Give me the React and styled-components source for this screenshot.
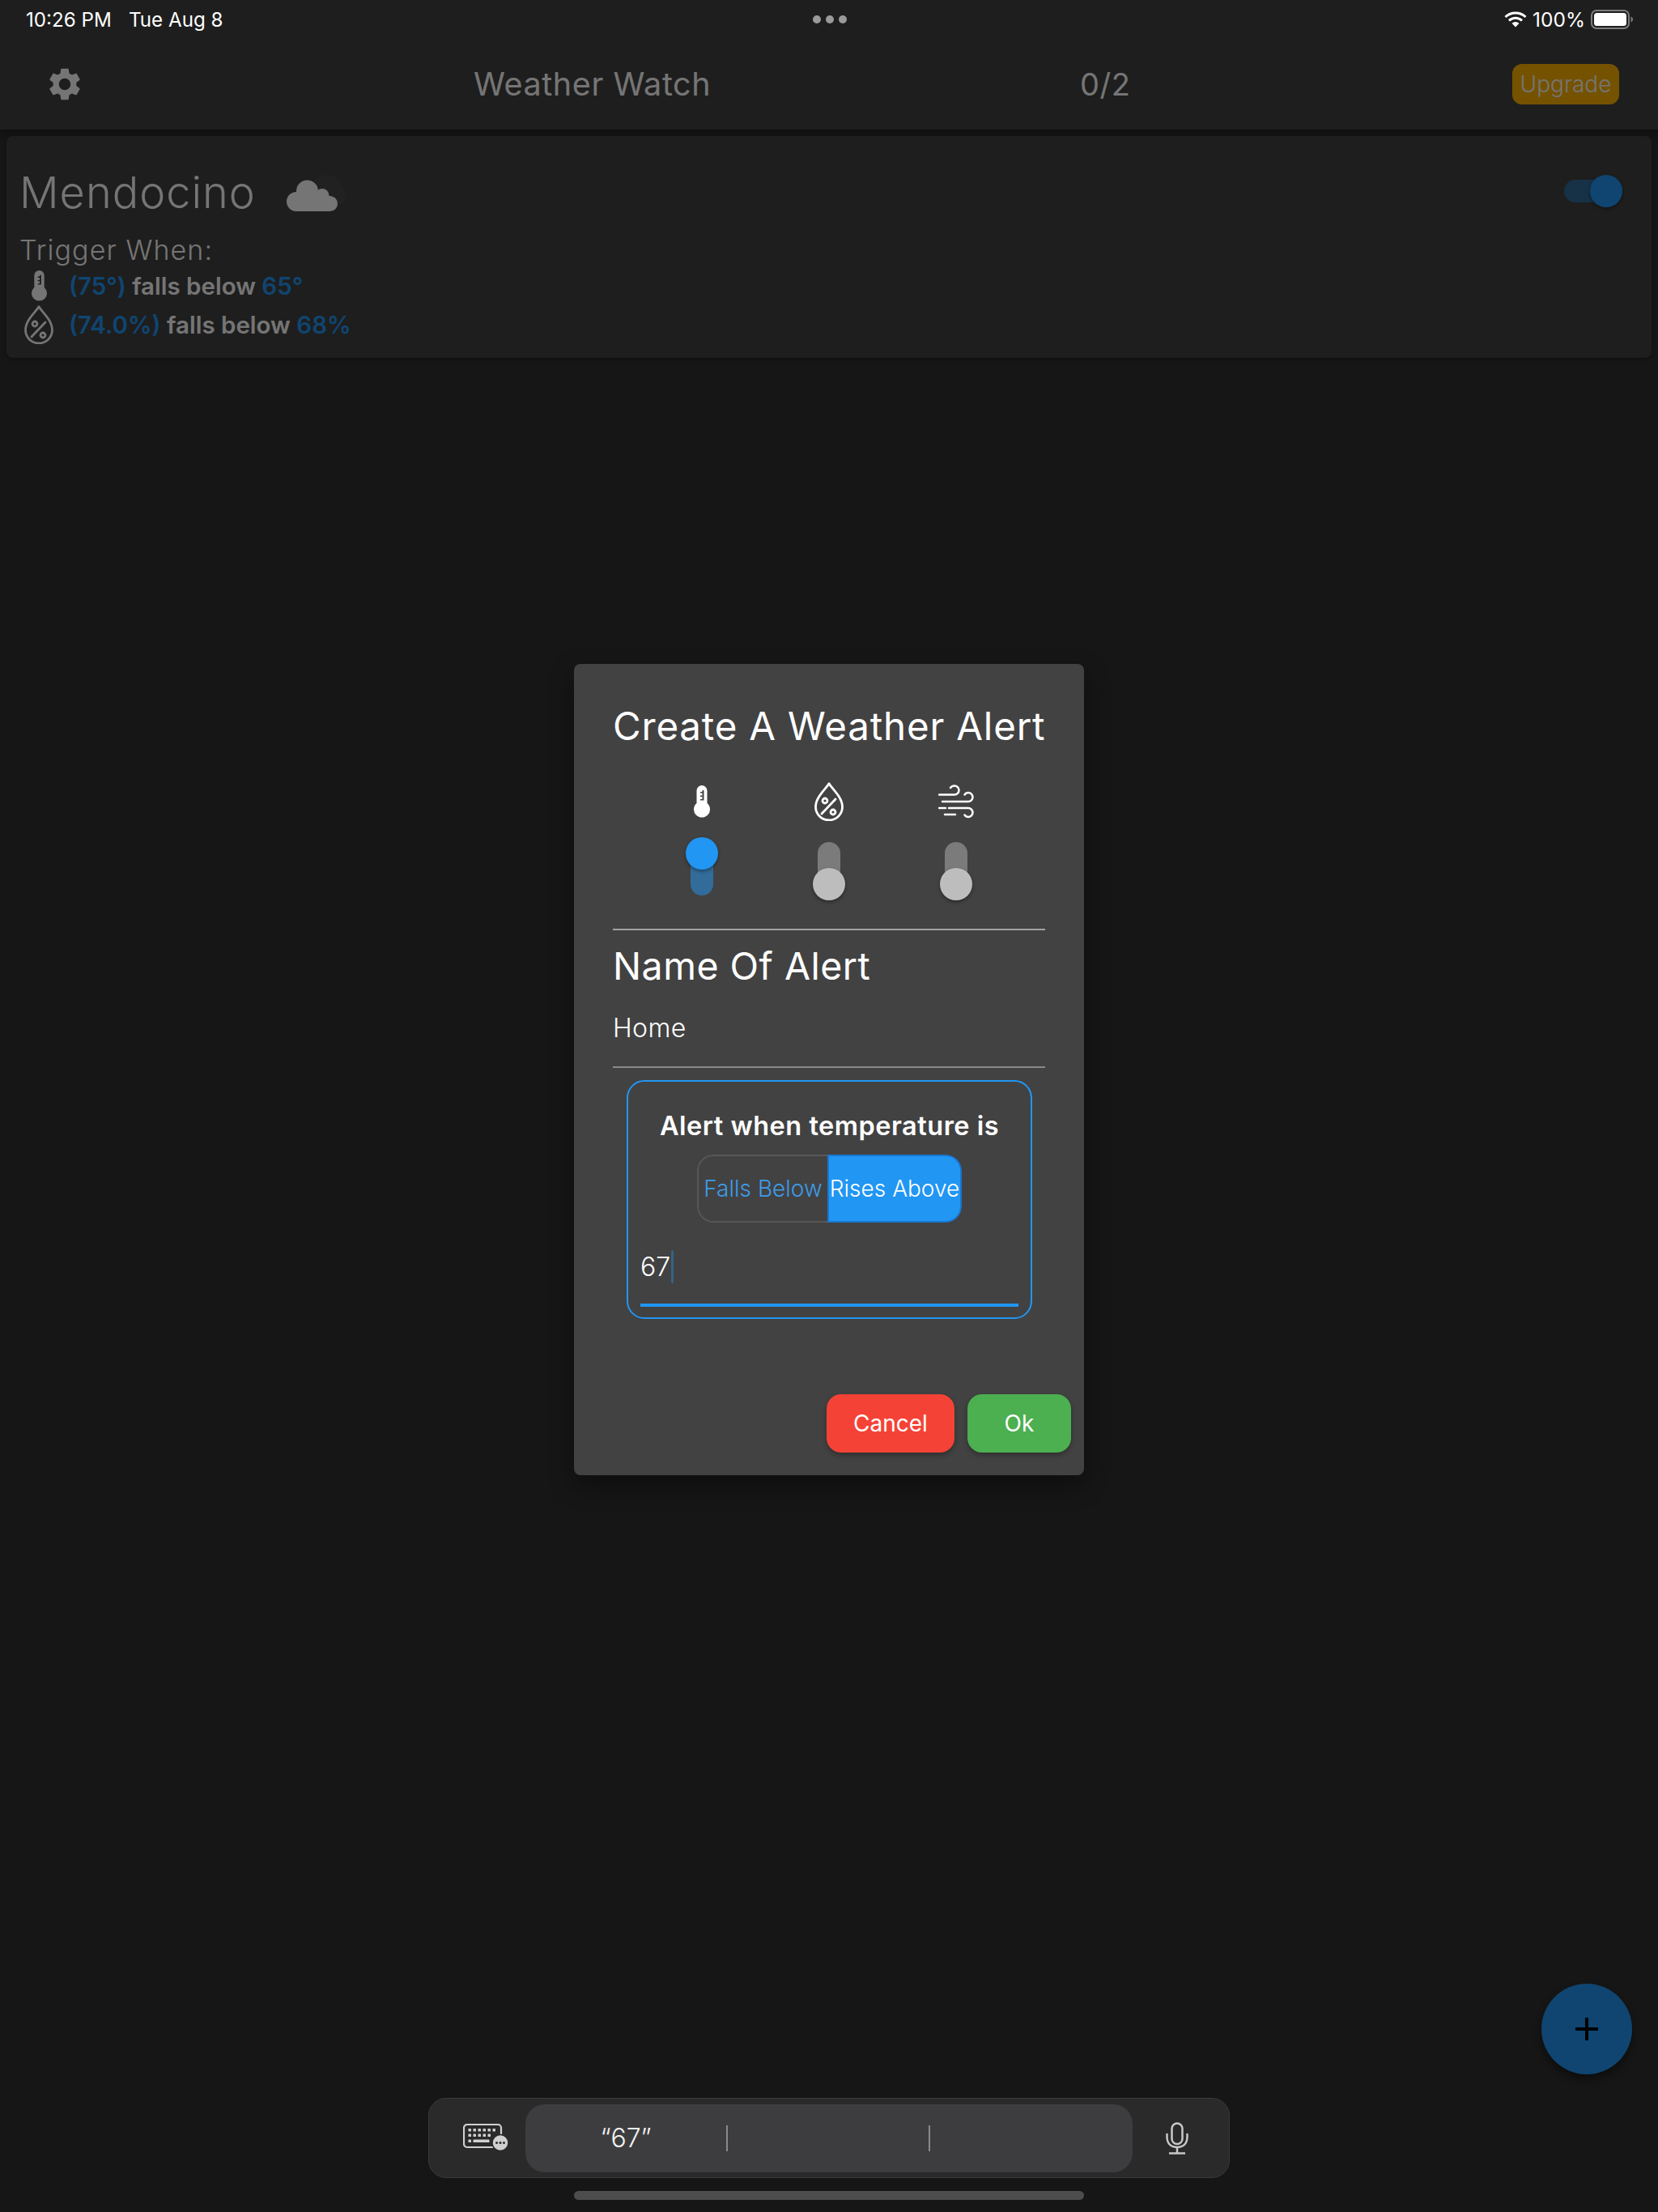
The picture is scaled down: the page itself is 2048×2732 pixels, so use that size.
import React from 'react';
import styled, { createGlobalStyle } from 'styled-components';

const GlobalStyle = createGlobalStyle`
  html, body {
    margin: 0;
    padding: 0;
    background: #303030;
  }
  * {
    box-sizing: border-box;
  }
  body {
    font-family: Inter, "Noto Sans", "Liberation Sans", sans-serif;
    color: #fff;
  }
`;

const Page = styled.div`
  position: relative;
  width: 2048px;
  height: 2732px;
  overflow: hidden;
  background: #303030;
`;

const TopBar = styled.header`
  height: 160px;
  background: #424242;
  box-shadow: 0 4px 10px rgba(0, 0, 0, 0.4);
`;

const StatusBar = styled.div`
  position: relative;
  z-index: 3;
  height: 48px;
  padding: 0 31px 0 32px;
  display: grid;
  grid-template-columns: 1fr auto 1fr;
  align-items: center;
  font-size: 24.5px;
  color: #fff;
`;

const StatusLeft = styled.div`
  display: flex;
  gap: 21px;
  font-size: 24.2px;
`;

const Dots = styled.div`
  display: flex;
  gap: 6px;
`;

const Dot = styled.span`
  width: 10px;
  height: 10px;
  border-radius: 50%;
  background: #9a9a9a;
`;

const StatusRight = styled.div`
  display: flex;
  justify-content: flex-end;
  align-items: center;
  gap: 7px;
`;

const Toolbar = styled.div`
  height: 112px;
  padding: 0 48px 0 56px;
  display: grid;
  grid-template-columns: 529px 749px 1fr auto;
  align-items: center;
`;

const AppTitle = styled.div`
  font-size: 39.5px;
  color: #fff;
  letter-spacing: 0.6px;
`;

const Counter = styled.div`
  font-size: 38px;
  color: #fff;
  letter-spacing: 0.6px;
`;

const Upgrade = styled.div`
  width: 132px;
  height: 50px;
  border-radius: 12px;
  background: #ffb300;
  display: flex;
  align-items: center;
  justify-content: center;
  font-size: 28px;
  font-weight: 300;
  color: #fff;
`;

const AlertCard = styled.section`
  margin: 8px 8px 0;
  padding: 29px 36px 16px 16px;
  height: 274px;
  border-radius: 8px;
  background: #424242;
  box-shadow: 0 2px 4px rgba(0, 0, 0, 0.3);
  color: #fff;
`;

const CardHead = styled.div`
  height: 80px;
  display: flex;
  align-items: center;
`;

const PlaceName = styled.div`
  font-size: 54px;
  font-weight: 300;
  letter-spacing: 1px;
`;

const CloudWrap = styled.div`
  margin-left: 38px;
  margin-top: 4px;
  display: flex;
`;

const HorizontalSwitch = styled.div`
  position: relative;
  margin-left: auto;
  margin-top: -2px;
  width: 72px;
  height: 28px;
  border-radius: 14px;
  background: rgba(33, 150, 243, 0.5);
`;

const HorizontalThumb = styled.div`
  position: absolute;
  right: 0;
  top: -6px;
  width: 40px;
  height: 40px;
  border-radius: 50%;
  background: #2196f3;
  box-shadow: 0 2px 4px rgba(0, 0, 0, 0.4);
`;

const TriggerLabel = styled.div`
  margin-top: 10px;
  height: 44px;
  line-height: 44px;
  font-size: 34px;
  font-weight: 300;
  letter-spacing: 1.1px;
`;

const TriggerRow = styled.div`
  height: ${p => p.$h}px;
  margin-bottom: 2px;
  display: flex;
  align-items: center;
  font-size: 29.5px;
  font-weight: 600;
`;

const RowIcon = styled.div`
  width: 61px;
  padding-left: 5px;
  display: flex;
  justify-content: center;
  padding-right: 18px;
  flex: none;
`;

const Value = styled.span`
  color: #2196f3;
  white-space: pre;
`;

const Fab = styled.div`
  position: absolute;
  left: 1904px;
  top: 2450px;
  width: 112px;
  height: 112px;
  border-radius: 50%;
  background: #2196f3;
  box-shadow: 0 6px 10px rgba(0, 0, 0, 0.4);
  display: flex;
  align-items: center;
  justify-content: center;
`;

const Scrim = styled.div`
  position: absolute;
  inset: 0;
  z-index: 2;
  background: rgba(0, 0, 0, 0.54);
  display: flex;
  align-items: center;
  justify-content: center;
  padding-bottom: 90px;
`;

const Dialog = styled.div`
  width: 630px;
  padding: 48px 48px 28px;
  border-radius: 8px;
  background: #424242;
  box-shadow: 0 12px 30px rgba(0, 0, 0, 0.4);
`;

const DialogTitle = styled.div`
  font-size: 47.5px;
  line-height: 58px;
  letter-spacing: 0.8px;
  white-space: nowrap;
`;

const MetricGrid = styled.div`
  margin-top: 40px;
  display: grid;
  grid-template-columns: repeat(3, 157px);
  justify-content: center;
`;

const Metric = styled.div`
  display: flex;
  flex-direction: column;
  align-items: center;
`;

const MetricIcon = styled.div`
  height: 48px;
  display: flex;
  align-items: center;
  justify-content: center;
`;

const VerticalSwitch = styled.div`
  position: relative;
  margin-top: 20px;
  width: 40px;
  height: 78px;
  display: flex;
  justify-content: center;
  padding-top: 6px;
`;

const VerticalTrack = styled.div`
  width: 28px;
  height: 66px;
  border-radius: 14px;
  background: ${p => (p.$on ? 'rgba(33, 150, 243, 0.5)' : 'rgba(255, 255, 255, 0.3)')};
`;

const VerticalThumb = styled.div`
  position: absolute;
  left: 0;
  ${p => (p.$on ? 'top: 0;' : 'bottom: 0;')}
  width: 40px;
  height: 40px;
  border-radius: 50%;
  background: ${p => (p.$on ? '#2196f3' : '#bdbdbd')};
  box-shadow: 0 2px 4px rgba(0, 0, 0, 0.4);
`;

const Divider = styled.div`
  height: 2px;
  background: ${p => p.$color};
  margin-top: ${p => p.$top}px;
`;

const SectionTitle = styled.div`
  margin-top: 15px;
  font-size: 46.5px;
  line-height: 58px;
  letter-spacing: 0.5px;
`;

const NameValue = styled.div`
  margin-top: 26px;
  font-size: 32px;
  line-height: 44px;
  font-weight: 300;
  letter-spacing: 0.4px;
`;

const ConditionBox = styled.div`
  margin: 15px 16px 0 17px;
  padding: 35px 15px 13px;
  height: 295px;
  border: 2px solid #2196f3;
  border-radius: 22px;
`;

const ConditionTitle = styled.div`
  text-align: center;
  font-size: 32.5px;
  font-weight: 600;
  line-height: 40px;
  letter-spacing: 0.5px;
  white-space: nowrap;
`;

const Segments = styled.div`
  margin: 15px auto 0;
  width: 327px;
  height: 84px;
  display: grid;
  grid-template-columns: 161px 166px;
  border-radius: 20px;
  overflow: hidden;
`;

const Segment = styled.div`
  display: flex;
  align-items: center;
  justify-content: center;
  font-size: 28px;
  font-weight: 300;
  white-space: nowrap;
  color: ${p => (p.$active ? '#fff' : '#3d9be9')};
  background: ${p => (p.$active ? '#2196f3' : 'transparent')};
  border: 2px solid ${p => (p.$active ? '#1976d2' : '#575757')};
  ${p => (p.$active ? '' : 'border-right: none;')}
  border-radius: ${p => (p.$active ? '0 20px 20px 0' : '20px 0 0 20px')};
`;

const AmountField = styled.div`
  margin-top: 32px;
  height: 44px;
  display: flex;
  align-items: center;
  font-size: 32px;
  font-weight: 300;
`;

const Caret = styled.span`
  width: 3px;
  height: 41px;
  margin-left: 1px;
  border-radius: 2px;
  background: rgba(33, 150, 243, 0.4);
`;

const FieldLine = styled.div`
  margin-top: 24px;
  height: 4px;
  background: #2196f3;
`;

const Actions = styled.div`
  margin: 93px -32px 0 0;
  display: flex;
  justify-content: flex-end;
  gap: 16px;
`;

const ActionButton = styled.div`
  width: ${p => p.$w}px;
  height: 72px;
  border-radius: 18px;
  background: ${p => p.$bg};
  box-shadow: 0 3px 6px rgba(0, 0, 0, 0.3);
  display: flex;
  align-items: center;
  justify-content: center;
  font-size: 28px;
`;

const Dock = styled.div`
  position: absolute;
  z-index: 3;
  left: 0;
  right: 0;
  bottom: 15px;
  display: flex;
  flex-direction: column;
  align-items: center;
  gap: 16px;
`;

const AssistBar = styled.div`
  width: 990px;
  height: 99px;
  padding-left: 42px;
  border: 1px solid #3a3a3a;
  border-radius: 22px;
  background: #2a2a2a;
  display: flex;
  align-items: center;
`;

const Suggestions = styled.div`
  margin-left: 21px;
  width: 750px;
  height: 84px;
  border-radius: 24px;
  background: #3d3d3f;
  display: grid;
  grid-template-columns: 248px 250px 252px;
  align-items: center;
`;

const Suggestion = styled.div`
  position: relative;
  text-align: center;
  font-size: 32px;
  font-weight: 300;
  color: #f2f2f2;
  height: 36px;
  line-height: 36px;

  &:not(:first-child)::before {
    content: '';
    position: absolute;
    left: 0;
    top: 2px;
    width: 2px;
    height: 32px;
    background: #8a8a8a;
  }
`;

const MicWrap = styled.div`
  margin-left: 41px;
  display: flex;
`;

const HomeIndicator = styled.div`
  width: 630px;
  height: 11px;
  border-radius: 6px;
  background: #4d4d4d;
`;

const GearIcon = () => (
  <svg width="48" height="48" viewBox="0 0 24 24" fill="#fff">
    <path d="M19.14 12.94c.04-.3.06-.61.06-.94 0-.32-.02-.64-.07-.94l2.03-1.58a.49.49 0 0 0 .12-.61l-1.92-3.32a.488.488 0 0 0-.59-.22l-2.39.96c-.5-.38-1.03-.7-1.62-.94l-.36-2.54a.484.484 0 0 0-.48-.41h-3.84c-.24 0-.43.17-.47.41l-.36 2.54c-.59.24-1.13.57-1.62.94l-2.39-.96c-.22-.08-.47 0-.59.22L2.74 8.87c-.12.21-.08.47.12.61l2.03 1.58c-.05.3-.09.63-.09.94s.02.64.07.94l-2.03 1.58a.49.49 0 0 0-.12.61l1.92 3.32c.12.22.37.29.59.22l2.39-.96c.5.38 1.03.7 1.62.94l.36 2.54c.05.24.24.41.48.41h3.84c.24 0 .44-.17.47-.41l.36-2.54c.59-.24 1.13-.56 1.62-.94l2.39.96c.22.08.47 0 .59-.22l1.92-3.32c.12-.22.07-.47-.12-.61l-2.01-1.58zM12 15.6c-1.98 0-3.6-1.62-3.6-3.6s1.62-3.6 3.6-3.6 3.6 1.62 3.6 3.6-1.62 3.6-3.6 3.6z" />
  </svg>
);

const WifiIcon = () => (
  <svg width="28" height="20" viewBox="0 0 28 20" fill="none" stroke="#fff" strokeWidth="3">
    <path d="M1.500 7a18 18 0 0 1 25 0" />
    <path d="M6 11.500a11.500 11.500 0 0 1 16 0" />
    <path d="M14 19.500l-4.500-4.800a6.500 6.500 0 0 1 9 0z" fill="#fff" stroke="none" />
  </svg>
);

const BatteryIcon = () => (
  <svg width="52" height="24" viewBox="0 0 52 24">
    <rect x="1" y="1" width="46" height="22" rx="6" fill="none" stroke="#7c7c7c" strokeWidth="2" />
    <rect x="4" y="4" width="40" height="16" rx="3.500" fill="#fff" />
    <path d="M49.500 8.500c1.500.6 2.500 1.900 2.500 3.500s-1 2.900-2.500 3.500z" fill="#7c7c7c" />
  </svg>
);

const CloudIcon = () => (
  <svg width="74" height="46" viewBox="0 0 74 46" fill="none">
    <g fill="#fff" opacity="0.035">
      <circle cx="49" cy="20" r="20" />
      <circle cx="62" cy="26" r="11" />
    </g>
    <g fill="#fff">
      <circle cx="12" cy="33" r="12" />
      <circle cx="25.500" cy="20" r="13.500" />
      <circle cx="44" cy="25.500" r="8.500" />
      <circle cx="53.500" cy="35.500" r="9.500" />
      <rect x="12" y="26" width="41.500" height="19" />
    </g>
  </svg>
);

const ThermometerIcon = ({ scale = 1 }) => (
  <svg width={20 * scale} height={40 * scale} viewBox="0 0 20 40" fill="#fff">
    <path
      fillRule="evenodd"
      d="M10 0a6.500 6.500 0 0 1 6.500 6.500V22a10 10 0 1 1-13 0V6.500A6.500 6.500 0 0 1 10 0zM10.500 6v2H8v1.500h2.500v3H8V14h2.500v3H8v1.500h4.500V6z"
    />
  </svg>
);

const DropIcon = () => (
  <svg width="36" height="48" viewBox="0 0 36 48" fill="none" stroke="#fff" strokeWidth="2.800">
    <path d="M18 1.800C14 8.500 1.500 18.500 1.500 30.500a16.500 16.500 0 0 0 33 0C34.500 18.500 22 8.500 18 1.800z" strokeLinejoin="round" />
    <circle cx="13" cy="23" r="3" />
    <circle cx="23" cy="37" r="3" />
    <path d="M26 21L9 39" strokeLinecap="round" />
  </svg>
);

const WindIcon = () => (
  <svg width="44" height="44" viewBox="0 0 44 44" fill="none" stroke="#fff" strokeWidth="2.500" strokeLinecap="round">
    <path d="M1 13.500H20a5.500 5.500 0 0 0 0-11c-2 0-4 1-5 2.500" />
    <path d="M5 22H37a5.500 5.500 0 0 0 0-11c-2 0-3.500 1-4.500 2.500" />
    <path d="M1 30H9" />
    <path d="M13 30H37a5.500 5.500 0 0 1 0 11c-2 0-3.500-1-4.500-2.500" />
    <path d="M8 38H21" />
  </svg>
);

const PlusIcon = () => (
  <svg width="28" height="28" viewBox="0 0 28 28" fill="#000">
    <rect x="12" y="0" width="4" height="28" />
    <rect x="0" y="12" width="28" height="4" />
  </svg>
);

const KeyboardIcon = () => (
  <svg width="56" height="36" viewBox="0 0 56 36">
    <rect x="1" y="1" width="46" height="28" rx="4" fill="none" stroke="#d0d0d0" strokeWidth="2.200" />
    <g fill="#d0d0d0">
      {[6.5, 12.5, 18.5, 24.5, 30.5, 36.5].map(x => (
        <rect key={`a${x}`} x={x} y="6" width="3.500" height="3.500" rx="0.6" />
      ))}
      {[6.5, 12.5, 18.5, 24.5, 30.5].map(x => (
        <rect key={`b${x}`} x={x} y="12.500" width="3.500" height="3.500" rx="0.6" />
      ))}
      <rect x="6.500" y="19.500" width="3.500" height="3.500" rx="0.6" />
      <rect x="12.500" y="19.500" width="20" height="3.500" rx="0.6" />
    </g>
    <circle cx="46" cy="23.500" r="10" fill="#d0d0d0" stroke="#2a2a2a" strokeWidth="1.500" />
    <g fill="#2a2a2a">
      <circle cx="41.500" cy="23.500" r="1.500" />
      <circle cx="46" cy="23.500" r="1.500" />
      <circle cx="50.500" cy="23.500" r="1.500" />
    </g>
  </svg>
);

const MicIcon = () => (
  <svg width="28" height="40" viewBox="0 0 28 40" fill="none" stroke="#c8c8c8" strokeWidth="2.500">
    <rect x="7.500" y="1.500" width="13" height="25.500" rx="6.500" />
    <path d="M1.500 15v3c0 9 5.500 13 12.500 13s12.500-4 12.500-13v-3" strokeLinecap="round" />
    <path d="M14 31v7" />
    <path d="M4 38.500h20" />
  </svg>
);

const triggers = [
  { h: 44, icon: <ThermometerIcon scale={0.95} />, current: '(75°)', target: '65°' },
  { h: 48, icon: <DropIcon />, current: '(74.0%)', target: '68%' },
];

const metrics = [
  { key: 'temp', icon: <ThermometerIcon />, on: true },
  { key: 'humidity', icon: <DropIcon />, on: false },
  { key: 'wind', icon: <WindIcon />, on: false },
];

export default function App() {
  return (
    <Page>
      <GlobalStyle />
      <TopBar>
        <StatusBar>
          <StatusLeft>
            <span>10:26 PM</span>
            <span>Tue Aug 8</span>
          </StatusLeft>
          <Dots>
            <Dot />
            <Dot />
            <Dot />
          </Dots>
          <StatusRight>
            <WifiIcon />
            <span>100%</span>
            <BatteryIcon />
          </StatusRight>
        </StatusBar>
        <Toolbar>
          <GearIcon />
          <AppTitle>Weather Watch</AppTitle>
          <Counter>0/2</Counter>
          <Upgrade>Upgrade</Upgrade>
        </Toolbar>
      </TopBar>

      <AlertCard>
        <CardHead>
          <PlaceName>Mendocino</PlaceName>
          <CloudWrap>
            <CloudIcon />
          </CloudWrap>
          <HorizontalSwitch>
            <HorizontalThumb />
          </HorizontalSwitch>
        </CardHead>
        <TriggerLabel>Trigger When:</TriggerLabel>
        {triggers.map(t => (
          <TriggerRow key={t.current} $h={t.h}>
            <RowIcon>{t.icon}</RowIcon>
            <Value>{t.current} </Value>
            <span>falls below&nbsp;</span>
            <Value>{t.target}</Value>
          </TriggerRow>
        ))}
      </AlertCard>

      <Fab>
        <PlusIcon />
      </Fab>

      <Scrim>
        <Dialog>
          <DialogTitle>Create A Weather Alert</DialogTitle>
          <MetricGrid>
            {metrics.map(m => (
              <Metric key={m.key}>
                <MetricIcon>{m.icon}</MetricIcon>
                <VerticalSwitch>
                  <VerticalTrack $on={m.on} />
                  <VerticalThumb $on={m.on} />
                </VerticalSwitch>
              </Metric>
            ))}
          </MetricGrid>
          <Divider $color="#a3a3a3" $top={35} />
          <SectionTitle>Name Of Alert</SectionTitle>
          <NameValue>Home</NameValue>
          <Divider $color="#8a8a8a" $top={25} />
          <ConditionBox>
            <ConditionTitle>Alert when temperature is</ConditionTitle>
            <Segments>
              <Segment>Falls Below</Segment>
              <Segment $active>Rises Above</Segment>
            </Segments>
            <AmountField>
              67
              <Caret />
            </AmountField>
            <FieldLine />
          </ConditionBox>
          <Actions>
            <ActionButton $w={158} $bg="#f44336">Cancel</ActionButton>
            <ActionButton $w={128} $bg="#4caf50">Ok</ActionButton>
          </Actions>
        </Dialog>
      </Scrim>

      <Dock>
        <AssistBar>
          <KeyboardIcon />
          <Suggestions>
            <Suggestion>“67”</Suggestion>
            <Suggestion />
            <Suggestion />
          </Suggestions>
          <MicWrap>
            <MicIcon />
          </MicWrap>
        </AssistBar>
        <HomeIndicator />
      </Dock>
    </Page>
  );
}
